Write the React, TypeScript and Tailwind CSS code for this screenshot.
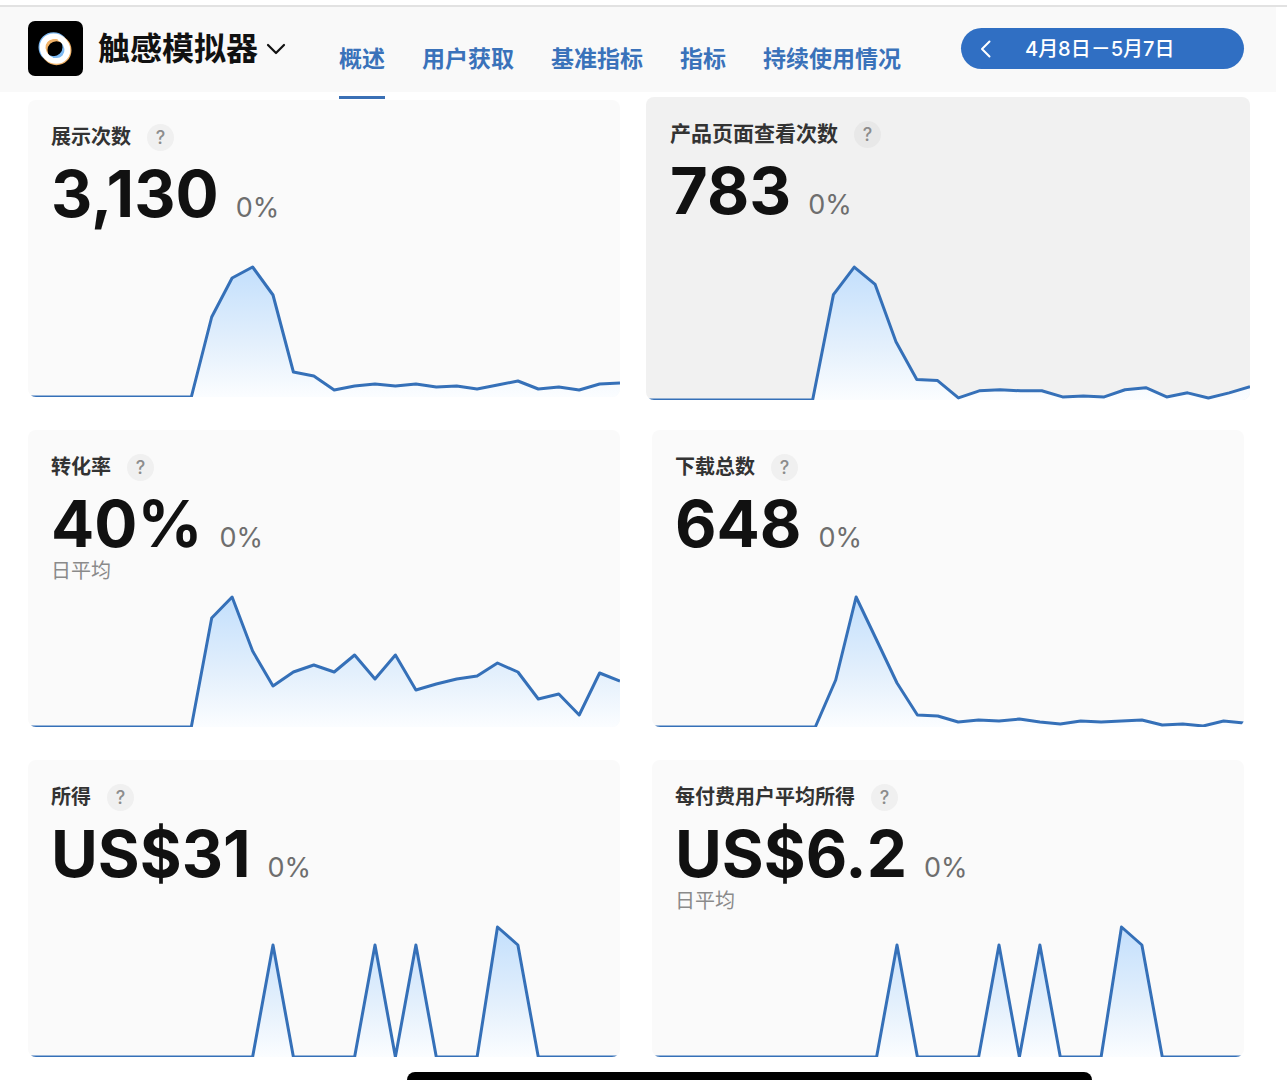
import React, { useId } from "react";
import clsx from "clsx";

const TABS = ["概述", "用户获取", "基准指标", "指标", "持续使用情况"];

const DAYS = 30;
const CHART_W = 592;
const CHART_H = 132;

type Metric = {
  title: string;
  value: string;
  change: string;
  note?: string;
  active?: boolean;
  // most recent days, anything earlier is zero
  data: number[];
};

const METRICS: Metric[] = [
  {
    title: "展示次数",
    value: "3,130",
    change: "0%",
    data: [80, 119, 130, 102, 25, 21, 7, 11, 13, 11, 13, 10, 11, 8, 12, 16, 8, 10, 7, 13, 14],
  },
  {
    title: "产品页面查看次数",
    value: "783",
    change: "0%",
    active: true,
    data: [103, 130, 113, 57, 20, 19, 2, 9, 10, 9, 9, 3, 4, 3, 10, 12, 3, 7, 2, 7, 13],
  },
  {
    title: "转化率",
    value: "40%",
    change: "0%",
    note: "日平均",
    data: [109, 130, 76, 41, 55, 62, 55, 72, 48, 72, 37, 43, 48, 51, 64, 55, 28, 33, 12, 54, 46],
  },
  {
    title: "下载总数",
    value: "648",
    change: "0%",
    data: [47, 130, 87, 44, 12, 11, 5, 7, 6, 8, 5, 3, 6, 5, 6, 7, 2, 3, 1, 6, 4],
  },
  {
    title: "所得",
    value: "US$31",
    change: "0%",
    data: [112, 0, 0, 0, 0, 112, 0, 112, 0, 0, 0, 130, 112, 0, 0, 0, 0, 0],
  },
  {
    title: "每付费用户平均所得",
    value: "US$6.2",
    change: "0%",
    note: "日平均",
    data: [112, 0, 0, 0, 0, 112, 0, 112, 0, 0, 0, 130, 112, 0, 0, 0, 0, 0],
  },
];

export default function App() {
  return (
    <div className="flex min-h-screen flex-col bg-white pt-[5px] font-[Inter,'Noto_Sans_CJK_SC',sans-serif] text-[#111]">
      <div className="border-t-2 border-[#e2e2e2]">
        <Header />
      </div>
      <main className="grid grid-cols-2 gap-x-8 gap-y-[33px] pt-2 pr-[43px] pl-7">
        {METRICS.map((m) => (
          <MetricCard key={m.title} metric={m} />
        ))}
      </main>
      <div className="mt-auto ml-[212px] h-2 w-[685px] self-center rounded-t-lg bg-black" />
    </div>
  );
}

function Header() {
  return (
    <header className="mr-[11px] flex h-[85px] items-start justify-between bg-[#f9f9f9] pr-8 pl-7">
      <div className="flex items-start">
        <button type="button" className="mt-[14px] flex items-center">
          <AppLogo />
          <span className="ml-[15px] text-[32px] leading-10 font-semibold">触感模拟器</span>
          <svg width="20" height="12" viewBox="0 0 20 12" className="ml-2" fill="none">
            <path
              d="M2 2l8 8 8-8"
              stroke="#111"
              strokeWidth="2.2"
              strokeLinecap="round"
              strokeLinejoin="round"
            />
          </svg>
        </button>
        <nav className="ml-[53px] flex gap-[37px] pt-[35px]">
          {TABS.map((tab, i) => (
            <a
              key={tab}
              href="#"
              className="relative text-[23px] leading-[34px] font-semibold whitespace-nowrap text-[#3a72ba]"
            >
              {tab}
              {i === 0 && (
                <span className="absolute inset-x-0 -bottom-[23px] h-[3px] bg-[#3a70b5]" />
              )}
            </a>
          ))}
        </nav>
      </div>
      <div className="mt-[21px] flex h-[41px] w-[283px] items-center rounded-full bg-[#306fc3] text-white">
        <button type="button" aria-label="上一时段" className="ml-[15px] p-1">
          <svg width="12" height="18" viewBox="0 0 12 18" fill="none">
            <path
              d="M9.500 1.500L2 9l7.500 7.500"
              stroke="currentColor"
              strokeWidth="2"
              strokeLinecap="round"
              strokeLinejoin="round"
            />
          </svg>
        </button>
        <button type="button" className="ml-[29px] text-xl leading-7 font-medium whitespace-nowrap">
          4月8日－5月7日
        </button>
      </div>
    </header>
  );
}

function AppLogo() {
  return (
    <svg width="55" height="55" viewBox="0 0 55 55">
      <rect width="55" height="55" rx="7" fill="#000" />
      <g fill="none">
        <circle cx="25.500" cy="26.200" r="12" stroke="#7db9f2" strokeWidth="6" />
        <circle cx="28.500" cy="29.200" r="12" stroke="#f0b268" strokeWidth="6" />
        <ellipse
          cx="27"
          cy="27.700"
          rx="13"
          ry="11.600"
          transform="rotate(42 27 27.700)"
          stroke="#fff"
          strokeWidth="5.800"
        />
        <path d="M18.600 26.500a8.800 8.800 0 0 1 11-7.500" stroke="#f0b268" strokeWidth="1.500" />
        <path d="M35.400 29.500a8.800 8.800 0 0 1-10.500 6.500" stroke="#7db9f2" strokeWidth="1.500" />
      </g>
    </svg>
  );
}

function MetricCard({ metric }: { metric: Metric }) {
  const { title, value, change, note, active, data } = metric;
  return (
    <section
      className={clsx(
        "flex flex-col overflow-hidden rounded-lg",
        active ? "-mx-[6px] -my-[3px] h-[303px] bg-[#f1f1f1]" : "h-[297px] bg-[#fafafa]"
      )}
    >
      <div className={clsx("pt-[23px]", active ? "px-6" : "px-[23px]")}>
        <div className="flex items-center gap-4">
          <h2
            className={clsx(
              "leading-7 font-semibold text-[#333]",
              active ? "text-[21px]" : "text-xl"
            )}
          >
            {title}
          </h2>
          <button
            type="button"
            aria-label={`${title}说明`}
            className={clsx(
              "size-[27px] rounded-full text-lg leading-[27px] font-medium text-[#8c8c8c]",
              active ? "bg-[#e8e8e8]" : "bg-[#f0f0f0]"
            )}
          >
            ?
          </button>
        </div>
        <p className="mt-[22px] flex items-baseline gap-[17px] leading-[42px]">
          <span className={clsx("font-bold", active ? "text-[65px]" : "text-[64px]")}>{value}</span>
          <span className="text-[27px] text-[#6e6e6e]">{change}</span>
        </p>
        {note && <p className="text-xl leading-6 text-[#8a8a8a]">{note}</p>}
      </div>
      <AreaChart data={data} active={active} />
    </section>
  );
}

function AreaChart({ data, active }: { data: number[]; active?: boolean }) {
  const id = useId();
  const values = [...Array(DAYS - data.length).fill(0), ...data];
  const line = values
    .map((v, i) => `${((i * CHART_W) / (DAYS - 1)).toFixed(1)},${CHART_H - v}`)
    .join(" ");

  return (
    <svg
      viewBox={`0 0 ${CHART_W} ${CHART_H}`}
      preserveAspectRatio="none"
      className={clsx("mt-auto block w-full", active ? "h-[135px]" : "h-[132px]")}
    >
      <defs>
        <linearGradient id={id} x1="0" y1="0" x2="0" y2="1">
          <stop offset="0" stopColor="#c3dffc" />
          <stop offset="0.600" stopColor="#e4f0fc" />
          <stop offset="1" stopColor="#fbfdff" />
        </linearGradient>
      </defs>
      <polygon points={`0,${CHART_H} ${line} ${CHART_W},${CHART_H}`} fill={`url(#${id})`} />
      <polyline
        points={line}
        fill="none"
        stroke="#3570b8"
        strokeWidth="3"
        strokeLinejoin="round"
        vectorEffect="non-scaling-stroke"
      />
    </svg>
  );
}
